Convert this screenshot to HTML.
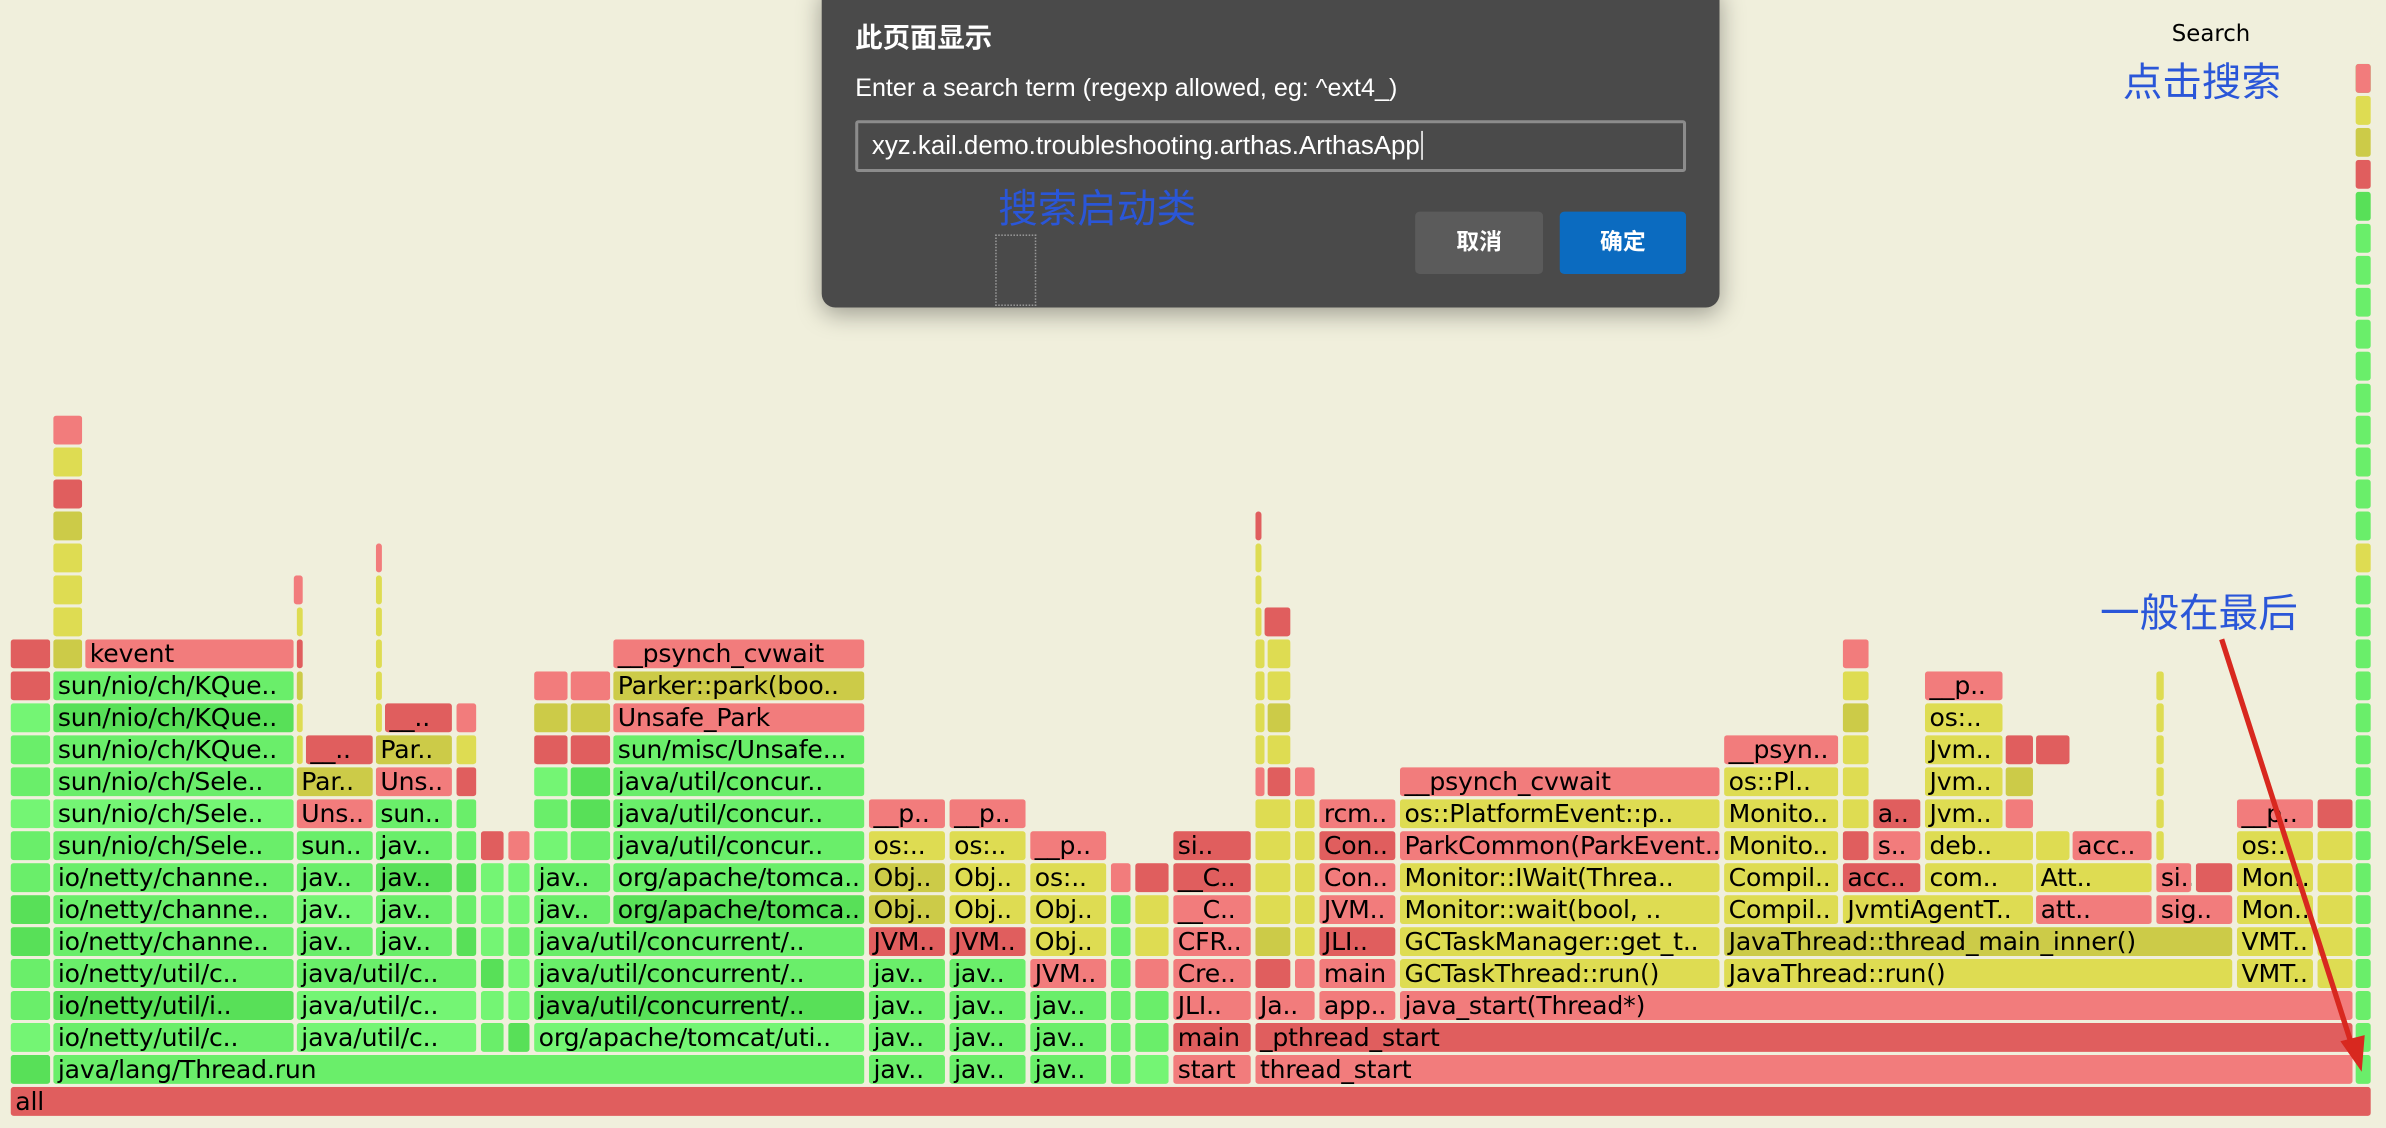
<!DOCTYPE html>
<html><head><meta charset="utf-8">
<style>
html,body{margin:0;padding:0;width:2386px;height:1128px;overflow:hidden;background:#f0efdc;}
#s{position:absolute;left:0;top:0;width:1568px;height:741px;transform:scale(1.5217,1.5223);transform-origin:0 0;font-family:"DejaVu Sans","Liberation Sans",sans-serif;}
.b{position:absolute;height:19px;border-radius:2px;font-size:16.5px;line-height:20px;color:#000;white-space:nowrap;clip-path:inset(0 0 -3px 0);padding-left:3px;box-sizing:border-box;letter-spacing:-0.1px;}
.cn{font-family:"Liberation Sans","Noto Sans CJK SC",sans-serif;}
</style></head><body>
<div id="s">
<div style="position:absolute;left:1453px;top:13px;transform:translateX(-50%);font-size:15px;font-family:'DejaVu Sans',sans-serif;">Search</div>
<div class="cn" style="position:absolute;left:1395px;top:34px;font-size:26px;color:#2a56d8;">点击搜索</div>
<div class="cn" style="position:absolute;left:1380px;top:383px;font-size:26px;color:#2a56d8;">一般在最后</div>
<div id="fg"></div>
<svg style="position:absolute;left:0;top:0" width="1568" height="741">
<line x1="1460" y1="420" x2="1546" y2="688" stroke="#d8281f" stroke-width="3.5"/>
<polygon points="1552,704 1538,684 1554,680" fill="#d8281f"/>
</svg>
<div class="cn" style="position:absolute;left:540px;top:-10px;width:590px;height:212px;background:#4a4a4a;border-radius:9px;box-shadow:0 4px 16px rgba(0,0,0,.35);color:#fff;">
 <div style="position:absolute;left:22px;top:21px;font-size:18px;font-weight:bold;">此页面显示</div>
 <div style="position:absolute;left:22px;top:59px;font-size:16.5px;">Enter a search term (regexp allowed, eg: ^ext4_)</div>
 <div style="position:absolute;left:22px;top:89px;width:546px;height:34px;border:2px solid #8c8c8c;border-radius:2px;box-sizing:border-box;font-size:17px;line-height:30px;padding-left:9px;">xyz.kail.demo.troubleshooting.arthas.ArthasApp<span style="border-left:1px solid #fff;margin-left:1px"></span></div>
 <div style="position:absolute;left:116px;top:127px;font-size:26px;color:#2a56d8;">搜索启动类</div>
 <div style="position:absolute;left:114px;top:164px;width:25px;height:45px;border:1px dotted #999;"></div>
 <div style="position:absolute;left:390px;top:149px;width:84px;height:41px;background:#5b5b5b;border-radius:3px;text-align:center;line-height:41px;font-size:15px;font-weight:bold;">取消</div>
 <div style="position:absolute;left:485px;top:149px;width:83px;height:41px;background:#0b6bc0;border-radius:3px;text-align:center;line-height:41px;font-size:15px;font-weight:bold;">确定</div>
</div>
</div>
<script>
var C={g:"#6aee6a",G:"#58e058",h:"#74f574",r:"#e05e5e",R:"#f27c7c",y:"#dedc52",Y:"#cccb48"};
var B=[
[0,[7,1558,'r','all']],
[1,[7,33,'G'],[35,568,'g','java/lang/Thread.run'],[571,621,'g','jav..'],[624,674,'g','jav..'],[677,727,'g','jav..'],[730,743,'g'],[746,768,'h'],[771,822,'R','start'],[825,1546,'R','thread_start'],[1548,1558,'g']],
[2,[7,33,'h'],[35,193,'g','io/netty/util/c..'],[195,313,'h','java/util/c..'],[316,331,'g'],[334,348,'G'],[351,568,'h','org/apache/tomcat/uti..'],[571,621,'g','jav..'],[624,674,'g','jav..'],[677,727,'g','jav..'],[730,743,'g'],[746,768,'g'],[771,822,'r','main'],[825,1546,'r','_pthread_start'],[1548,1558,'g']],
[3,[7,33,'g'],[35,193,'G','io/netty/util/i..'],[195,313,'h','java/util/c..'],[316,331,'h'],[334,348,'h'],[351,568,'G','java/util/concurrent/..'],[571,621,'g','jav..'],[624,674,'g','jav..'],[677,727,'g','jav..'],[730,743,'g'],[746,768,'g'],[771,822,'R','JLI..'],[825,864,'R','Ja..'],[867,917,'R','app..'],[920,1546,'R','java_start(Thread*)'],[1548,1558,'g']],
[4,[7,33,'g'],[35,193,'g','io/netty/util/c..'],[195,313,'g','java/util/c..'],[316,331,'G'],[334,348,'h'],[351,568,'g','java/util/concurrent/..'],[571,621,'g','jav..'],[624,674,'g','jav..'],[677,727,'R','JVM..'],[730,743,'g'],[746,768,'R'],[771,822,'R','Cre..'],[825,848,'r'],[851,864,'R'],[867,917,'R','main'],[920,1130,'y','GCTaskThread::run()'],[1133,1467,'y','JavaThread::run()'],[1470,1520,'y','VMT..'],[1523,1546,'y'],[1548,1558,'g']],
[5,[7,33,'G'],[35,193,'g','io/netty/channe..'],[195,245,'g','jav..'],[247,297,'g','jav..'],[300,313,'G'],[316,331,'h'],[334,348,'g'],[351,568,'g','java/util/concurrent/..'],[571,621,'r','JVM..'],[624,674,'r','JVM..'],[677,727,'y','Obj..'],[730,743,'g'],[746,768,'y'],[771,822,'R','CFR..'],[825,848,'Y'],[851,864,'y'],[867,917,'r','JLI..'],[920,1130,'y','GCTaskManager::get_t..'],[1133,1467,'Y','JavaThread::thread_main_inner()'],[1470,1520,'y','VMT..'],[1523,1546,'y'],[1548,1558,'g']],
[6,[7,33,'G'],[35,193,'g','io/netty/channe..'],[195,245,'h','jav..'],[247,297,'g','jav..'],[300,313,'g'],[316,331,'h'],[334,348,'h'],[351,401,'g','jav..'],[403,568,'G','org/apache/tomca..'],[571,621,'Y','Obj..'],[624,674,'y','Obj..'],[677,727,'y','Obj..'],[730,743,'g'],[746,768,'y'],[771,822,'R','__C..'],[825,848,'y'],[851,864,'y'],[867,917,'R','JVM..'],[920,1130,'y','Monitor::wait(bool, ..'],[1133,1208,'y','Compil..'],[1211,1336,'y','JvmtiAgentT..'],[1338,1414,'R','att..'],[1417,1467,'R','sig..'],[1470,1520,'y','Mon..'],[1523,1546,'y'],[1548,1558,'g']],
[7,[7,33,'g'],[35,193,'g','io/netty/channe..'],[195,245,'g','jav..'],[247,297,'G','jav..'],[300,313,'G'],[316,331,'h'],[334,348,'h'],[351,401,'g','jav..'],[403,568,'g','org/apache/tomca..'],[571,621,'Y','Obj..'],[624,674,'y','Obj..'],[677,727,'y','os:..'],[730,743,'R'],[746,768,'r'],[771,822,'r','__C..'],[825,848,'y'],[851,864,'y'],[867,917,'R','Con..'],[920,1130,'y','Monitor::IWait(Threa..'],[1133,1208,'y','Compil..'],[1211,1262,'r','acc..'],[1265,1336,'y','com..'],[1338,1414,'y','Att..'],[1417,1440,'R','si..'],[1443,1467,'r'],[1470,1520,'y','Mon..'],[1523,1546,'y'],[1548,1558,'g']],
[8,[7,33,'g'],[35,193,'g','sun/nio/ch/Sele..'],[195,245,'g','sun..'],[247,297,'g','jav..'],[300,313,'g'],[316,331,'r'],[334,348,'R'],[351,373,'h'],[375,401,'g'],[403,568,'g','java/util/concur..'],[571,621,'y','os:..'],[624,674,'y','os:..'],[677,727,'R','__p..'],[771,822,'r','si..'],[825,848,'y'],[851,864,'y'],[867,917,'r','Con..'],[920,1130,'R','ParkCommon(ParkEvent..'],[1133,1208,'y','Monito..'],[1211,1228,'r'],[1231,1262,'R','s..'],[1265,1336,'y','deb..'],[1338,1360,'y'],[1362,1414,'R','acc..'],[1417,1422,'y'],[1470,1520,'y','os:..'],[1523,1546,'y'],[1548,1558,'g']],
[9,[7,33,'h'],[35,193,'h','sun/nio/ch/Sele..'],[195,245,'R','Uns..'],[247,297,'g','sun..'],[300,313,'g'],[351,373,'g'],[375,401,'G'],[403,568,'g','java/util/concur..'],[571,621,'R','__p..'],[624,674,'R','__p..'],[825,848,'y'],[851,864,'y'],[867,917,'R','rcm..'],[920,1130,'y','os::PlatformEvent::p..'],[1133,1208,'y','Monito..'],[1211,1228,'y'],[1231,1262,'r','a..'],[1265,1316,'y','Jvm..'],[1318,1336,'R'],[1417,1422,'y'],[1470,1520,'R','__p..'],[1523,1546,'r'],[1548,1558,'g']],
[10,[7,33,'g'],[35,193,'g','sun/nio/ch/Sele..'],[195,245,'Y','Par..'],[247,297,'R','Uns..'],[300,313,'r'],[351,373,'h'],[375,401,'G'],[403,568,'g','java/util/concur..'],[825,831,'R'],[833,848,'r'],[851,864,'R'],[920,1130,'R','__psynch_cvwait'],[1133,1208,'y','os::Pl..'],[1211,1228,'y'],[1265,1316,'y','Jvm..'],[1318,1336,'Y'],[1417,1422,'y'],[1548,1558,'g']],
[11,[7,33,'g'],[35,193,'g','sun/nio/ch/KQue..'],[195,199,'y'],[201,245,'r','__..'],[247,297,'Y','Par..'],[300,313,'y'],[351,373,'r'],[375,401,'r'],[403,568,'g','sun/misc/Unsafe...'],[825,831,'y'],[833,848,'y'],[1133,1208,'R','__psyn..'],[1211,1228,'y'],[1265,1316,'y','Jvm..'],[1318,1336,'r'],[1338,1360,'r'],[1417,1422,'y'],[1548,1558,'g']],
[12,[7,33,'h'],[35,193,'G','sun/nio/ch/KQue..'],[195,199,'y'],[247,251,'y'],[253,297,'r','__..'],[300,313,'R'],[351,373,'Y'],[375,401,'Y'],[403,568,'R','Unsafe_Park'],[825,831,'y'],[833,848,'Y'],[1211,1228,'Y'],[1265,1316,'y','os:..'],[1417,1422,'y'],[1548,1558,'g']],
[13,[7,33,'r'],[35,193,'g','sun/nio/ch/KQue..'],[195,199,'Y'],[247,251,'y'],[351,373,'R'],[375,401,'R'],[403,568,'Y','Parker::park(boo..'],[825,831,'y'],[833,848,'y'],[1211,1228,'y'],[1265,1316,'R','__p..'],[1417,1422,'y'],[1548,1558,'g']],
[14,[7,33,'r'],[35,54,'Y'],[56,193,'R','kevent'],[195,199,'r'],[247,251,'y'],[403,568,'R','__psynch_cvwait'],[825,831,'y'],[833,848,'y'],[1211,1228,'R'],[1548,1558,'g']],
[15,[35,54,'y'],[195,199,'y'],[247,251,'y'],[825,829,'y'],[831,848,'r'],[1548,1558,'g']],
[16,[35,54,'y'],[193,199,'R'],[247,251,'y'],[825,829,'y'],[1548,1558,'g']],
[17,[35,54,'y'],[247,251,'R'],[825,829,'y'],[1548,1558,'y']],
[18,[35,54,'Y'],[825,829,'r'],[1548,1558,'g']],
[19,[35,54,'r'],[1548,1558,'g']],
[20,[35,54,'y'],[1548,1558,'g']],
[21,[35,54,'R'],[1548,1558,'g']]
];
for(var i=22;i<=32;i++){B.push([i,[1548,1558,i<28?'g':(i>=29&&i<=31?(i==29?'r':(i==30?'Y':'y')):'G')]]);}
B.push([32,[1548,1558,'R']]);
var fg=document.getElementById('fg'),h='';
B.forEach(function(r){var row=r[0];for(var k=1;k<r.length;k++){var b=r[k];h+='<div class="b" style="left:'+b[0]+'px;top:'+(714-21*row)+'px;width:'+(b[1]-b[0])+'px;background:'+C[b[2]]+'">'+(b[3]||'')+'</div>';}});
fg.innerHTML=h;
</script>
</body></html>
